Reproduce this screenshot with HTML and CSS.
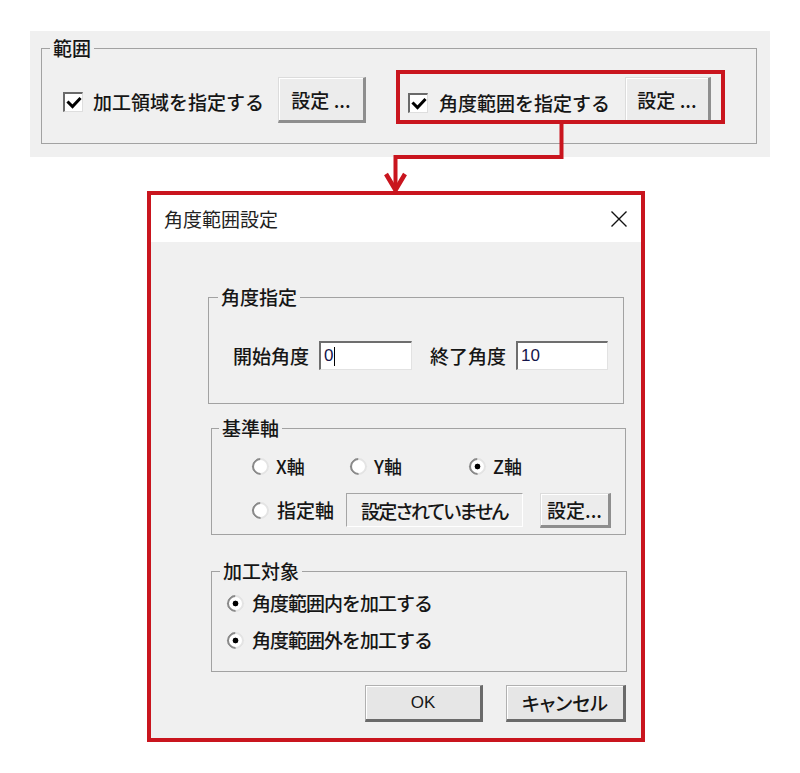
FILE: index.html
```html
<!DOCTYPE html>
<html lang="ja">
<head>
<meta charset="utf-8">
<title>角度範囲設定</title>
<link rel="stylesheet" href="styles.css">
</head>
<body>
<div class="top">
  <fieldset class="grp grp-range">
    <legend>範囲</legend>
    <div class="range-row">
      <div class="chk-item chk-item-1">
        <span class="chk"><svg viewBox="0 0 16 16" width="16" height="16"><path d="M2.5 7.5 L6.5 11.5 L13.5 4" fill="none" stroke="#000" stroke-width="3" stroke-linecap="square"/></svg></span>
        <span class="txt">加工領域を指定する</span>
      </div>
      <div class="btn btn-set">設定 ...</div>
      <div class="hl">
        <div class="chk-item chk-item-2">
          <span class="chk"><svg viewBox="0 0 16 16" width="16" height="16"><path d="M2.5 7.5 L6.5 11.5 L13.5 4" fill="none" stroke="#000" stroke-width="3" stroke-linecap="square"/></svg></span>
          <span class="txt">角度範囲を指定する</span>
        </div>
        <div class="btn btn-set btn-set-2">設定 ...</div>
      </div>
    </div>
  </fieldset>
</div>

<svg class="connector" width="800" height="773" viewBox="0 0 800 773">
  <path d="M561.5 122 V157 H395.5 V190" fill="none" stroke="#c9151e" stroke-width="4"/>
  <path d="M386 174 L395.5 190 L405 174" fill="none" stroke="#c9151e" stroke-width="4.5"/>
</svg>

<div class="dialog">
  <div class="titlebar">
    <span class="title">角度範囲設定</span>
    <svg class="close" width="18" height="18" viewBox="0 0 18 18"><path d="M1.5 1.5 L16.5 16.5 M16.5 1.5 L1.5 16.5" stroke="#111" stroke-width="1.4" fill="none"/></svg>
  </div>
  <div class="dbody">
    <fieldset class="grp g1">
      <legend>角度指定</legend>
      <div class="angle-row">
        <span class="lbl lbl-start">開始角度</span>
        <div class="edit edit-1"><span>0</span><span class="caret"></span></div>
        <span class="lbl lbl-end">終了角度</span>
        <div class="edit edit-2"><span>10</span></div>
      </div>
    </fieldset>

    <fieldset class="grp g2">
      <legend>基準軸</legend>
      <div class="axis-row">
        <div class="radio-item"><span class="radio"></span><span class="txt">X軸</span></div>
        <div class="radio-item"><span class="radio"></span><span class="txt">Y軸</span></div>
        <div class="radio-item"><span class="radio on"></span><span class="txt">Z軸</span></div>
      </div>
      <div class="axis-row2">
        <div class="radio-item radio-spec"><span class="radio"></span><span class="txt">指定軸</span></div>
        <div class="static">設定されていません</div>
        <div class="btn btn-axis">設定...</div>
      </div>
    </fieldset>

    <fieldset class="grp g3">
      <legend>加工対象</legend>
      <div class="radio-item target"><span class="radio on"></span><span class="txt">角度範囲内を加工する</span></div>
      <div class="radio-item target target-2"><span class="radio on"></span><span class="txt">角度範囲外を加工する</span></div>
    </fieldset>

    <div class="actions">
      <div class="btn btn-dlg btn-ok">OK</div>
      <div class="btn btn-dlg btn-cancel">キャンセル</div>
    </div>
  </div>
</div>
</body>
</html>
```

FILE: styles.css
```css
html, body {
  margin: 0;
  padding: 0;
  background: #ffffff;
}

body {
  position: relative;
  width: 800px;
  height: 773px;
  overflow: hidden;
  font-family: "Noto Sans CJK JP", "Noto Sans", sans-serif;
  font-size: 19px;
  font-weight: 500;
  color: #161616;
}

/* ---------- top panel ---------- */
.top {
  margin: 31px 0 0 30px;
  width: 740px;
  height: 126px;
  box-sizing: border-box;
  padding: 7px 0 0 11px;
  background: #f0f0f0;
}

.grp {
  margin: 0;
  padding: 0;
  min-width: 0;
  box-sizing: border-box;
  border: 1px solid #a2a2a2;
}

.grp legend {
  padding: 0 3px;
  font-size: 19px;
  line-height: 20px;
  height: 20px;
}

.grp-range {
  width: 716px;
  height: 106px;
  padding-top: 12px;
}

.grp-range legend {
  margin-left: 8px;
}

.range-row {
  display: flex;
  align-items: flex-start;
  height: 54px;
}

.chk-item {
  display: flex;
  align-items: center;
  height: 24px;
  line-height: 24px;
  white-space: nowrap;
}

.chk {
  width: 20px;
  height: 20px;
  box-sizing: border-box;
  border-style: solid;
  border-width: 2px 1px 1px 2px;
  border-color: #6a6a6a #dedede #dedede #6a6a6a;
  background: #fff;
  display: flex;
  align-items: center;
  justify-content: center;
  flex: none;
}

.chk-item-1 {
  margin: 20px 0 0 21px;
  width: 215px;
  gap: 10px;
}

.chk-item-2 {
  margin-top: 17px;
  width: 217px;
  gap: 11px;
}

.btn {
  box-sizing: border-box;
  display: flex;
  align-items: center;
  justify-content: center;
  white-space: nowrap;
  background: #ececec;
  border-style: solid;
  border-width: 1px 3px 3px 1px;
  border-color: #dcdcdc #8e8e8e #8e8e8e #dcdcdc;
  box-shadow: inset 1px 1px 0 #ffffff;
  flex: none;
}

.btn-set {
  width: 88px;
  height: 46px;
  margin-top: 7px;
}

.hl {
  margin-left: 30px;
  width: 329px;
  height: 54px;
  box-sizing: border-box;
  border: 4px solid #c9151e;
  padding-left: 8px;
  display: flex;
  align-items: flex-start;
  overflow: hidden;
}

.btn-set-2 {
  width: 86px;
  margin-top: 3px;
}

/* ---------- connector ---------- */
.connector {
  position: absolute;
  left: 0;
  top: 0;
  pointer-events: none;
}

/* ---------- dialog ---------- */
.dialog {
  margin: 34px 0 0 147px;
  width: 498px;
  height: 551px;
  box-sizing: border-box;
  border: 4px solid #c9151e;
  background: #f0f0f0;
  display: flex;
  flex-direction: column;
}

.titlebar {
  height: 47px;
  flex: none;
  background: #ffffff;
  display: flex;
  align-items: center;
  justify-content: space-between;
  padding: 0 13px 0 13px;
}

.title {
  font-size: 19px;
  line-height: 24px;
  font-weight: 400;
  color: #222;
}

.close {
  display: block;
}

.dbody {
  flex: 1;
  padding-top: 45px;
}

.g1 {
  margin-left: 57px;
  width: 416px;
  height: 117px;
}

.g1 legend {
  margin-left: 9px;
}

.angle-row {
  display: flex;
  align-items: center;
  padding-top: 34px;
  height: 29px;
}

.lbl {
  white-space: nowrap;
  line-height: 24px;
}

.lbl-start {
  margin-left: 24px;
  width: 86px;
}

.lbl-end {
  margin-left: 18px;
  width: 86px;
}

.edit {
  box-sizing: border-box;
  height: 29px;
  border-style: solid;
  border-width: 2px 1px 1px 2px;
  border-color: #6e6e6e #e2e2e2 #e2e2e2 #6e6e6e;
  background: #ffffff;
  display: flex;
  align-items: center;
  padding-left: 3px;
  font-family: "Liberation Sans", Arial, sans-serif;
  font-weight: 400;
  font-size: 17px;
  color: #15154a;
}

.edit-1 {
  width: 93px;
}

.edit-2 {
  width: 92px;
}

.caret {
  width: 1px;
  height: 19px;
  background: #000;
  margin-left: 1px;
}

.g2 {
  margin: 14px 0 0 60px;
  width: 415px;
  height: 117px;
}

.g2 legend {
  margin-left: 7px;
}

.axis-row {
  display: grid;
  grid-template-columns: 98px 119px auto;
  margin: 16px 0 0 40px;
  height: 24px;
}

.radio-item {
  display: flex;
  align-items: center;
  gap: 7px;
  height: 24px;
  line-height: 24px;
  white-space: nowrap;
}

.radio {
  width: 17px;
  height: 17px;
  box-sizing: border-box;
  border-radius: 50%;
  border: 2px solid;
  border-color: #8a8a8a #e4e4e4 #e4e4e4 #8a8a8a;
  transform: rotate(-45deg);
  background: #ffffff;
  flex: none;
}

.radio.on {
  background: radial-gradient(circle, #000 0 2.6px, #fff 3.2px);
}

.axis-row .txt {
  font-size: 18px;
}

.axis-row2 {
  display: flex;
  align-items: center;
  margin: 15px 0 0 40px;
  height: 34px;
}

.radio-spec {
  width: 94px;
  gap: 8px;
}

.static {
  box-sizing: border-box;
  width: 177px;
  height: 34px;
  border: 1px solid;
  border-color: #a5a5a5 #ffffff #ffffff #a5a5a5;
  padding-left: 14px;
  display: flex;
  align-items: center;
  white-space: nowrap;
  overflow: hidden;
  font-feature-settings: "palt";
  letter-spacing: -1.7px;
}

.btn-axis {
  margin-left: 17px;
  width: 71px;
  height: 35px;
}

.g3 {
  margin: 26px 0 0 60px;
  width: 416px;
  height: 111px;
  padding-top: 10px;
}

.g3 legend {
  margin-left: 8px;
}

.target {
  margin-left: 15px;
  gap: 8px;
}

.target .txt {
  letter-spacing: -1px;
}

.target-2 {
  margin-top: 13px;
}

.actions {
  display: flex;
  justify-content: flex-end;
  gap: 23px;
  margin-top: 13px;
  padding-right: 15px;
}

.btn-dlg {
  height: 37px;
  background: #e6e6e6;
  border-color: #b0b0b0 #6a6a6a #6a6a6a #b0b0b0;
}

.btn-ok {
  width: 118px;
  font-family: "Liberation Sans", Arial, sans-serif;
  font-size: 17px;
}

.btn-cancel {
  width: 120px;
  font-feature-settings: "palt";
}
```
